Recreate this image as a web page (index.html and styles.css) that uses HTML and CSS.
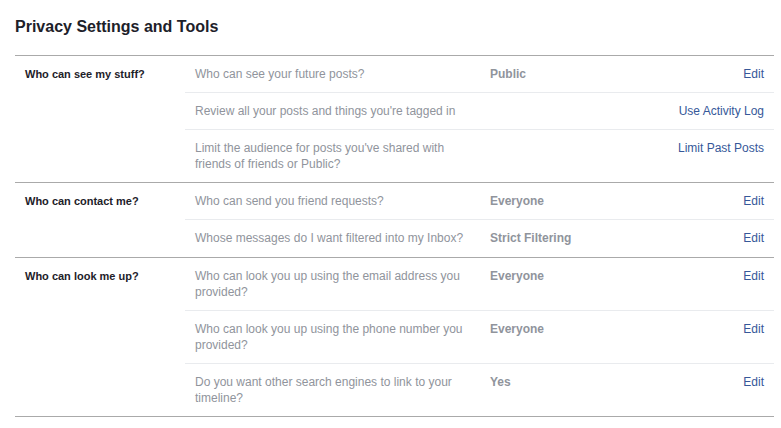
FILE: index.html
```html
<!DOCTYPE html>
<html lang="en">
<head>
    <meta charset="UTF-8">
    <title>Privacy Settings and Tools</title>
    <link rel="stylesheet" href="styles.css">
</head>
<body>
    <div class="page">
        <h2 class="title">Privacy Settings and Tools</h2>

        <div class="section">
            <div class="section-head">Who can see my stuff?</div>
            <div class="rows">
                <div class="row">
                    <div class="label">Who can see your future posts?</div>
                    <div class="value">Public</div>
                    <a class="action" href="#">Edit</a>
                </div>
                <div class="row">
                    <div class="label">Review all your posts and things you're tagged in</div>
                    <div class="value"></div>
                    <a class="action" href="#">Use Activity Log</a>
                </div>
                <div class="row">
                    <div class="label">Limit the audience for posts you've shared with friends of friends or Public?</div>
                    <div class="value"></div>
                    <a class="action" href="#">Limit Past Posts</a>
                </div>
            </div>
        </div>

        <div class="section section-contact">
            <div class="section-head">Who can contact me?</div>
            <div class="rows">
                <div class="row">
                    <div class="label">Who can send you friend requests?</div>
                    <div class="value">Everyone</div>
                    <a class="action" href="#">Edit</a>
                </div>
                <div class="row">
                    <div class="label">Whose messages do I want filtered into my Inbox?</div>
                    <div class="value">Strict Filtering</div>
                    <a class="action" href="#">Edit</a>
                </div>
            </div>
        </div>

        <div class="section">
            <div class="section-head">Who can look me up?</div>
            <div class="rows">
                <div class="row">
                    <div class="label">Who can look you up using the email address you provided?</div>
                    <div class="value">Everyone</div>
                    <a class="action" href="#">Edit</a>
                </div>
                <div class="row">
                    <div class="label">Who can look you up using the phone number you provided?</div>
                    <div class="value">Everyone</div>
                    <a class="action" href="#">Edit</a>
                </div>
                <div class="row">
                    <div class="label">Do you want other search engines to link to your timeline?</div>
                    <div class="value">Yes</div>
                    <a class="action" href="#">Edit</a>
                </div>
            </div>
        </div>
    </div>
</body>
</html>
```

FILE: styles.css
```css
body {
    margin: 0;
    background: #fff;
    font-family: Helvetica, 'Liberation Sans', Arial, sans-serif;
}

.page {
    padding: 17px 7px 12px 15px;
}

.title {
    margin: 0 0 18px;
    font-size: 16px;
    line-height: 20px;
    font-weight: bold;
    color: #1d2129;
}

.section {
    display: grid;
    grid-template-columns: 170px 1fr;
    border-top: 1px solid #aaa;
}

.section:last-child {
    border-bottom: 1px solid #aaa;
}

.section-head {
    padding: 10px 10px;
    font-size: 11px;
    line-height: 16px;
    font-weight: bold;
    color: #1d2129;
}

.row {
    display: grid;
    grid-template-columns: 295px 1fr auto;
    padding: 10px 10px;
    font-size: 12px;
    line-height: 16px;
    border-top: 1px solid #e9ebee;
}

.row:first-child {
    border-top: none;
}

.section-contact .row:last-child {
    padding-bottom: 11px;
}

.label {
    color: #90949c;
    padding-right: 12px;
}

.value {
    color: #90949c;
    font-weight: bold;
}

.action {
    color: #365899;
    text-decoration: none;
    text-align: right;
}
```
